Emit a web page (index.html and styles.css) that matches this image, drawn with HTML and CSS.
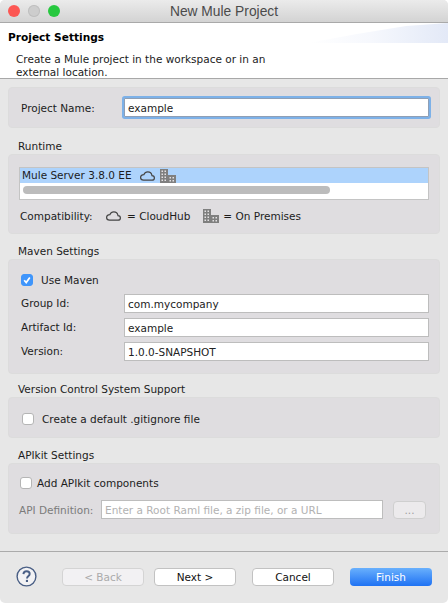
FILE: index.html
```html
<!DOCTYPE html>
<html lang="en">
<head>
    <meta charset="UTF-8">
    <meta name="viewport" content="width=device-width, initial-scale=1.0">
    <title>New Mule Project</title>
    <link rel="stylesheet" href="styles.css">
</head>
<body>
    <svg class="icon-defs" width="0" height="0">
        <symbol id="cloud" viewBox="0 0 15 10">
            <path d="M3.6 9.2H11.8C13.3 9.2 14.4 8.2 14.4 6.9C14.4 5.6 13.4 4.7 12 4.6C11.6 2.4 9.9 0.9 7.8 0.9C6 0.9 4.6 1.9 3.9 3.6C2 3.7 0.6 5 0.6 6.6C0.6 8.1 1.9 9.2 3.6 9.2Z" fill="none" stroke="#444" stroke-width="1.2"/>
        </symbol>
        <symbol id="building" viewBox="0 0 16 14">
            <path d="M0 0H8V14H0ZM8 6H16V14H8Z" fill="#7f7f7f"/>
            <path d="M1.5 1.5H3V3H1.5ZM4.5 1.5H6V3H4.5ZM1.5 4.5H3V6H1.5ZM4.5 4.5H6V6H4.5ZM1.5 7.5H3V9H1.5ZM4.5 7.5H6V9H4.5ZM1.5 10.5H3V12H1.5ZM4.5 10.5H6V12H4.5ZM9.5 8H11V9.5H9.5ZM12.5 8H14V9.5H12.5ZM9.5 11H11V12.5H9.5ZM12.5 11H14V12.5H12.5Z" fill="#e4e2e4"/>
        </symbol>
    </svg>

    <div class="window">
        <div class="titlebar">
            <span class="light light-red"></span>
            <span class="light light-grey"></span>
            <span class="light light-green"></span>
            <span class="title">New Mule Project</span>
        </div>

        <div class="header">
            <h2>Project Settings</h2>
            <p>Create a Mule project in the workspace or in an<br>external location.</p>
        </div>

        <div class="content">
            <div class="panel panel-name">
                <label class="row-label">Project Name:</label>
                <div class="field field-focus">example</div>
            </div>

            <div class="group-label">Runtime</div>
            <div class="panel panel-runtime">
                <div class="list">
                    <div class="list-row">
                        <span>Mule Server 3.8.0 EE</span>
                        <svg class="cloud"><use href="#cloud"/></svg>
                        <svg class="building"><use href="#building"/></svg>
                    </div>
                    <div class="list-scroll"><div class="scroll-thumb"></div></div>
                </div>
                <div class="compat">
                    <span class="compat-label">Compatibility:</span>
                    <svg class="cloud"><use href="#cloud"/></svg>
                    <span class="compat-text">= CloudHub</span>
                    <svg class="building"><use href="#building"/></svg>
                    <span>= On Premises</span>
                </div>
            </div>

            <div class="group-label">Maven Settings</div>
            <div class="panel panel-maven">
                <div class="check check-maven">
                    <span class="box box-on">
                        <svg width="12" height="12" viewBox="0 0 12 12"><path d="M3.2 6.2L5.2 8.6L8.8 3.4" fill="none" stroke="#fff" stroke-width="1.7"/></svg>
                    </span>
                    Use Maven
                </div>
                <div class="form-row">
                    <label class="row-label">Group Id:</label>
                    <div class="field">com.mycompany</div>
                </div>
                <div class="form-row">
                    <label class="row-label">Artifact Id:</label>
                    <div class="field">example</div>
                </div>
                <div class="form-row">
                    <label class="row-label">Version:</label>
                    <div class="field">1.0.0-SNAPSHOT</div>
                </div>
            </div>

            <div class="group-label">Version Control System Support</div>
            <div class="panel panel-vcs">
                <div class="check">
                    <span class="box"></span>
                    Create a default .gitignore file
                </div>
            </div>

            <div class="group-label">APIkit Settings</div>
            <div class="panel panel-apikit">
                <div class="check check-tight">
                    <span class="box"></span>
                    Add APIkit components
                </div>
                <div class="api-row">
                    <label class="row-label api-label">API Definition:</label>
                    <div class="field api-field">Enter a Root Raml file, a zip file, or a URL</div>
                    <button type="button" class="browse">...</button>
                </div>
            </div>
        </div>

        <div class="footer">
            <svg class="help" width="21" height="21" viewBox="0 0 21 21">
                <circle cx="10.5" cy="10.5" r="9.4" fill="#f2f2f4" stroke="#4a5f85" stroke-width="1.4"/>
                <path d="M7.4 8.1C7.5 6.2 8.8 5.2 10.6 5.2C12.4 5.2 13.7 6.3 13.7 7.9C13.7 9.9 11 10 11 12.4" fill="none" stroke="#4a5f85" stroke-width="1.9"/>
                <rect x="9.9" y="13.9" width="2.1" height="2.1" fill="#4a5f85"/>
            </svg>
            <button type="button" class="btn btn-back" disabled>&lt; Back</button>
            <button type="button" class="btn btn-next">Next &gt;</button>
            <button type="button" class="btn btn-cancel">Cancel</button>
            <button type="button" class="btn btn-finish">Finish</button>
        </div>
    </div>
</body>
</html>
```

FILE: styles.css
```css
html, body {
    margin: 0;
    background-color: #fff;
}
body {
    font-family: "DejaVu Sans", sans-serif;
    font-size: 10.5px;
    color: #1c1c1c;
    overflow: hidden;
}
.icon-defs {
    display: block;
    height: 0;
}
.window {
    width: 448px;
    height: 603px;
    display: flex;
    flex-direction: column;
    background-color: #e7e7e7;
    border-radius: 5px;
    overflow: hidden;
}
.titlebar {
    height: 22px;
    flex: none;
    display: flex;
    align-items: center;
    padding-left: 8px;
    gap: 8px;
    position: relative;
    background: linear-gradient(#ebebeb, #d3d3d3);
    border-bottom: 1px solid #a9a9a9;
}
.light {
    width: 12px;
    height: 12px;
    border-radius: 50%;
}
.light-red {
    background-color: #fc5753;
}
.light-grey {
    background-color: #cdcdcd;
    box-shadow: inset 0 0 0 1px #bfbfbf;
}
.light-green {
    background-color: #27c83f;
}
.title {
    position: absolute;
    left: 0;
    right: 0;
    text-align: center;
    font-family: "Liberation Sans", sans-serif;
    font-size: 13.8px;
    color: #4b4b4b;
}
.header {
    height: 55px;
    flex: none;
    background-color: #fff;
    border-bottom: 1px solid #a8a8a8;
    position: relative;
}
/* banner swoosh in the top right corner */
.header::after {
    content: "";
    position: absolute;
    top: 0;
    right: 0;
    width: 140px;
    height: 20px;
    background: linear-gradient(90deg, #fff, #f6f8fd 45%, #e3e9f7);
    clip-path: polygon(0 100%, 35% 55%, 70% 15%, 100% 0, 100% 100%);
}
.header h2 {
    margin: 0;
    padding: 7px 0 0 8px;
    font-size: 10.6px;
    line-height: 14px;
    color: #000;
}
.header p {
    margin: 9px 0 0 16px;
    line-height: 13px;
}
.content {
    flex: 1;
    padding: 8px 8px 0;
}
.panel {
    background-color: #dfdde0;
    border: 1px solid #dcdcdc;
    border-radius: 4px;
    box-sizing: border-box;
}
.panel-name {
    height: 41px;
    display: flex;
    align-items: center;
    padding-left: 12px;
    margin-bottom: 12px;
}
.panel-name .row-label {
    width: 103px;
}
.group-label {
    padding-left: 10px;
    line-height: 12px;
    height: 14px;
}
.panel-runtime {
    height: 80px;
    padding: 12px 10px 0;
    margin-bottom: 11px;
}
.panel-maven {
    height: 115px;
    padding: 13px 10px 0 12px;
    margin-bottom: 9px;
}
.panel-vcs {
    height: 41px;
    padding: 14px 13px 0;
    margin-bottom: 11px;
}
.panel-apikit {
    height: 71px;
    padding: 12px 11px 0;
}
.row-label {
    display: block;
}
.field {
    box-sizing: border-box;
    background-color: #fff;
    border: 1px solid #bdbdbd;
    height: 19px;
    line-height: 18px;
    padding-left: 3px;
    color: #222;
}
.field-focus {
    width: 305px;
    height: 19px;
    border: 1px solid #8f9fb5;
    box-shadow: 0 0 0 2px #7db1e8;
    border-radius: 1px;
}
.list {
    height: 33px;
    box-sizing: border-box;
    background-color: #fff;
    border: 1px solid #c4c4c4;
}
.list-row {
    height: 15px;
    line-height: 13px;
    display: flex;
    align-items: center;
    padding-left: 2px;
    background-color: #add3fc;
}
.list-row .cloud {
    margin-left: 8px;
}
.list-row .building {
    margin-left: 5px;
}
.cloud {
    width: 15px;
    height: 10px;
}
.building {
    width: 16px;
    height: 14px;
}
.list-scroll {
    padding: 3px 3px 0;
}
.scroll-thumb {
    width: 307px;
    height: 8px;
    border-radius: 4px;
    background-color: #bcbcbc;
}
.compat {
    display: flex;
    align-items: center;
    margin-top: 9px;
    padding-left: 1px;
}
.compat-label {
    width: 86px;
}
.compat .cloud {
    margin-right: 6px;
}
.compat .building {
    margin-right: 4px;
}
.compat-text {
    margin-right: 13px;
}
.check {
    display: flex;
    align-items: center;
    gap: 8px;
    height: 14px;
}
.check-maven {
    margin-bottom: 7px;
}
.check-tight {
    gap: 5px;
}
.box {
    width: 12px;
    height: 12px;
    box-sizing: border-box;
    flex: none;
    background-color: #fff;
    border: 1px solid #b5b5b5;
    border-radius: 3px;
}
.box-on {
    background-color: #3f95fb;
    border-color: #3f95fb;
    display: flex;
    align-items: center;
    justify-content: center;
}
.box-on svg {
    flex: none;
}
.form-row {
    display: flex;
    align-items: center;
    margin-bottom: 5px;
}
.form-row .row-label {
    width: 103px;
    padding-bottom: 2px;
}
.form-row .field {
    width: 305px;
}
.api-row {
    display: flex;
    align-items: center;
    margin-top: 10px;
    margin-left: -1px;
    color: #7b7b7b;
}
.api-label {
    width: 82px;
    flex: none;
}
.api-field {
    width: 282px;
    flex: none;
    color: #b2b2b2;
    padding-left: 3px;
}
.browse {
    width: 33px;
    height: 18px;
    margin-left: 10px;
    padding: 0;
    font: inherit;
    color: #9f9f9f;
    background-color: #eceaec;
    border: 1px solid #cfcfcf;
    border-radius: 4px;
}
.footer {
    height: 52px;
    flex: none;
    box-sizing: border-box;
    border-top: 1px solid #ababab;
    display: flex;
    align-items: flex-start;
    padding: 14px 0 0 16px;
}
.help {
    margin-right: 25px;
}
.btn {
    width: 82px;
    height: 18px;
    margin-top: 2px;
    padding: 0;
    box-sizing: border-box;
    font: inherit;
    color: #111;
    background-color: #fff;
    border: 1px solid #c2c2c2;
    border-radius: 4px;
}
.btn-back {
    background-color: #f2f1f3;
    color: #ababab;
    border-color: #d4d4d4;
}
.btn-next {
    margin-left: 10px;
}
.btn-cancel {
    margin-left: 16px;
}
.btn-finish {
    margin-left: 16px;
    color: #fff;
    border: none;
    background: linear-gradient(#69b0fd, #1f72f3);
}
```
